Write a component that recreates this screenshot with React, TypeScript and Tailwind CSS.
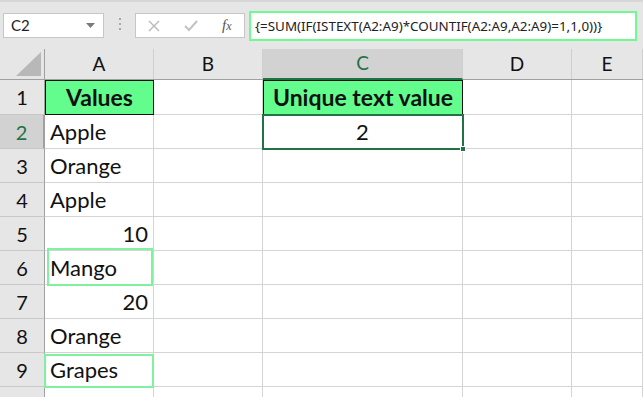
import React from "react";

const cols = ["A", "B", "C", "D", "E"];
const colWidths = ["w-[109px]", "w-[109px]", "w-[200px]", "w-[109px]", "w-[71px]"];

type Cell = { text: string; align?: "left" | "right" | "center"; bold?: boolean; fill?: boolean };

const rows: Record<number, Record<string, Cell>> = {
  1: {
    A: { text: "Values", align: "center", bold: true, fill: true },
    C: { text: "Unique text value", align: "center", bold: true, fill: true },
  },
  2: { A: { text: "Apple" }, C: { text: "2", align: "center" } },
  3: { A: { text: "Orange" } },
  4: { A: { text: "Apple" } },
  5: { A: { text: "10", align: "right" } },
  6: { A: { text: "Mango" } },
  7: { A: { text: "20", align: "right" } },
  8: { A: { text: "Orange" } },
  9: { A: { text: "Grapes" } },
  10: {},
};

const alignClass = {
  left: "justify-start pl-[5px]",
  right: "justify-end pr-[5px]",
  center: "justify-center",
};

function FormulaBar() {
  return (
    <div className="flex h-[49px] items-start border-t-2 border-[#d6d6d6] bg-[#e6e6e6]">
      <div className="ml-[3px] mt-[11px] flex h-[25px] w-[101px] items-center justify-between border border-[#c6c6c6] bg-white pl-[7px] pr-[8px] text-[15px] text-[#222]">
        <span>C2</span>
        <svg width="9" height="5" viewBox="0 0 9 5">
          <path d="M0 0h9L4.5 5z" fill="#7a7a7a" />
        </svg>
      </div>
      <div className="ml-[15px] mt-[16px] flex flex-col gap-[3px]">
        <span className="h-[2px] w-[2px] bg-[#a8a8a8]" />
        <span className="h-[2px] w-[2px] bg-[#a8a8a8]" />
        <span className="h-[2px] w-[2px] bg-[#a8a8a8]" />
      </div>
      <div className="ml-[14px] mt-[11px] flex h-[25px] w-[110px] items-center border border-[#c6c6c6] bg-white">
        <svg className="ml-[12px]" width="12" height="12" viewBox="0 0 12 12">
          <path d="M1 1l10 10M11 1L1 11" stroke="#b8b8b8" strokeWidth="1.4" />
        </svg>
        <svg className="ml-[24px]" width="14" height="12" viewBox="0 0 14 12">
          <path d="M1 6l4 4 8-9" stroke="#c2c2c2" strokeWidth="2" fill="none" />
        </svg>
        <span className="ml-[24px] font-['Liberation_Serif',serif] text-[15px] italic text-[#555]">
          f<span className="text-[12px]">x</span>
        </span>
      </div>
      <div className="ml-[4px] mt-[9px] flex h-[30px] w-[388px] items-center border-2 border-[#6efb94] bg-white pl-[4px] font-['Noto_Sans',sans-serif] text-[13.4px] text-[#222]">
        {"{=SUM(IF(ISTEXT(A2:A9)*COUNTIF(A2:A9,A2:A9)=1,1,0))}"}
      </div>
    </div>
  );
}

export default function App() {
  return (
    <div className="h-[397px] w-[643px] overflow-hidden bg-white font-['Lato',sans-serif] text-[#111]">
      <FormulaBar />
      <div className="relative">
        <div className="flex h-[31px] border-b border-[#a0a0a0] bg-[#e6e6e6] text-[19px]">
          <div className="relative w-[45px] border-r border-[#a0a0a0]">
            <svg className="absolute bottom-[3px] right-[3px]" width="25" height="24" viewBox="0 0 25 24">
              <path d="M25 0v24H0z" fill="#b8b8b8" />
            </svg>
          </div>
          {cols.map((c, i) => (
            <div
              key={c}
              className={`flex items-center justify-center border-r border-[#cfcfcf] ${colWidths[i]} ${
                c === "C" ? "-mb-px border-b-2 border-b-[#217346] bg-[#d2d2d2] text-[#217346]" : ""
              }`}
            >
              {c}
            </div>
          ))}
        </div>
        {Object.entries(rows).map(([n, cells]) => {
          const r = Number(n);
          return (
            <div key={n} className={`flex ${r === 1 ? "h-[35px]" : "h-[34px]"}`}>
              <div
                className={`flex w-[45px] items-center justify-center border-b border-r border-b-[#c8c8c8] border-r-[#a0a0a0] text-[20px] ${
                  r === 2 ? "border-r-2 border-r-[#217346] bg-[#d2d2d2] text-[#217346]" : "bg-[#e6e6e6]"
                }`}
              >
                {r < 10 ? n : null}
              </div>
              {cols.map((c, i) => {
                const cell = cells[c];
                return (
                  <div
                    key={c}
                    className={`flex items-center ${colWidths[i]} ${
                      cell?.fill
                        ? "border border-[#111] bg-[#63fd8d] text-[23px] font-bold"
                        : "border-b border-r border-[#d4d4d4] text-[22px]"
                    } ${alignClass[cell?.align ?? "left"]}`}
                  >
                    {cell?.text}
                  </div>
                );
              })}
            </div>
          );
        })}
        <div className="absolute left-[262px] top-[65px] h-[36px] w-[202px] border-2 border-[#217346]">
          <div className="absolute -bottom-[4px] -right-[4px] h-[6px] w-[6px] border border-white bg-[#217346]" />
        </div>
        <div className="absolute left-[47px] top-[199px] h-[38px] w-[106px] border-2 border-[#7ef29e]" />
        <div className="absolute left-[44px] top-[305px] h-[34px] w-[110px] border-2 border-[#7ef29e]" />
      </div>
    </div>
  );
}
